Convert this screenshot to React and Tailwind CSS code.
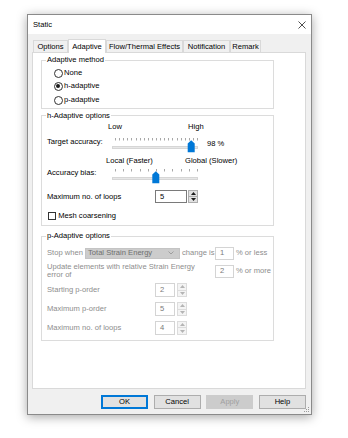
import React from "react";

function Spin({ disabled }) {
  const edge = disabled ? "border-[#dcdcdc]" : "border-[#adadad]";
  const fill = disabled ? "#b4b4b4" : "#1a1a1a";
  return (
    <div className={`flex flex-col w-[10px] h-full border ${edge} ${disabled ? "bg-[#f4f4f4]" : "bg-[#e1e1e1]"}`}>
      <div className={`flex-1 flex items-center justify-center border-b ${edge}`}>
        <svg width="5" height="3" viewBox="0 0 5 3">
          <path d="M0 3 L2.5 0 L5 3Z" fill={fill} />
        </svg>
      </div>
      <div className="flex-1 flex items-center justify-center">
        <svg width="5" height="3" viewBox="0 0 5 3">
          <path d="M0 0 L2.5 3 L5 0Z" fill={fill} />
        </svg>
      </div>
    </div>
  );
}

function Slider({ ticks, thumb }) {
  const xs = Array.from({ length: ticks }, (_, i) => 5 + (82 * i) / (ticks - 1));
  return (
    <svg width="90" height="18" viewBox="0 0 90 18" className="shrink-0">
      {xs.map((x, i) => (
        <line key={i} x1={Math.round(x) + 0.5} x2={Math.round(x) + 0.5} y1="2" y2="4.5" stroke="#a8a8a8" strokeWidth="1" />
      ))}
      <rect x="2.5" y="10.5" width="85" height="2" fill="#e7e7e7" stroke="#d6d6d6" strokeWidth="1" />
      <path d={`M${thumb} 7.5 L${thumb + 3.5} 4.3 L${thumb + 7} 7.5 V16.3 H${thumb} Z`} fill="#0078d7" />
    </svg>
  );
}

function Radio({ checked, label, className }) {
  return (
    <div className={`flex items-center h-[13px] pl-[12px] gap-[1.5px] ${className || ""}`}>
      <div className="w-[8.5px] h-[8.5px] rounded-full border border-[#333] bg-white flex items-center justify-center">
        {checked && <div className="w-[4px] h-[4px] rounded-full bg-[#1a1a1a]" />}
      </div>
      <span>{label}</span>
    </div>
  );
}

function Box({ value, w, h, disabled }) {
  return (
    <div
      className={`${w} ${h} bg-white border flex items-center pl-[4px] ${
        disabled ? "border-[#d4d4d4] text-[#7a7a7a]" : "border-[#7a7a7a] text-black"
      }`}
    >
      {value}
    </div>
  );
}

export default function App() {
  const tabs = [
    { name: "Options", w: "w-[35px]" },
    { name: "Adaptive", w: "w-[38px]", active: true },
    { name: "Flow/Thermal Effects", w: "w-[77px]" },
    { name: "Notification", w: "w-[47px]" },
    { name: "Remark", w: "w-[31px]" },
  ];

  return (
    <div className="w-[348px] h-[438px] bg-white overflow-hidden font-['Liberation_Sans',Arial,sans-serif] text-[7.6px] leading-[10px] text-black">
      {/* Dialog window */}
      <div className="ml-[27px] mt-[14px] w-[285px] h-[401px] border border-[#8a8a8a] bg-[#f0f0f0] flex flex-col relative shadow-[0_2px_10px_rgba(0,0,0,0.35)]">
        {/* Title bar */}
        <div className="h-[19px] bg-white flex items-center justify-between pl-[5px] pr-[5px]">
          <span>Static</span>
          <svg width="8" height="8" viewBox="0 0 8 8">
            <path d="M0.5 0.5 L7.5 7.5 M7.5 0.5 L0.5 7.5" stroke="#222" strokeWidth="0.8" />
          </svg>
        </div>

        <div className="flex flex-col pl-[4px] pr-[5px] pt-[5px]">
          {/* Tabs */}
          <div className="flex items-end h-[13px] ml-[1px]">
            {tabs.map((t) =>
              t.active ? (
                <div
                  key={t.name}
                  className={`${t.w} h-[14px] -mb-[1px] relative z-10 bg-white border border-b-0 border-[#d9d9d9] flex items-center justify-center`}
                >
                  {t.name}
                </div>
              ) : (
                <div
                  key={t.name}
                  className={`${t.w} h-[12px] bg-[#f0f0f0] border border-b-0 border-[#d9d9d9] flex items-center justify-center`}
                >
                  {t.name}
                </div>
              )
            )}
          </div>

          {/* Panel */}
          <div className="h-[337px] bg-white border border-[#d9d9d9] pl-[8px]">
            {/* Adaptive method */}
            <fieldset className="mt-[2.3px] w-[233px] h-[54px] border border-[#dcdcdc]">
              <legend className="ml-[4px] px-[1px] leading-[10px]">Adaptive method</legend>
              <div className="pt-[1.7px]">
                <Radio label="None" />
                <Radio label="h-adaptive" checked />
                <Radio label="p-adaptive" className="mt-[1px]" />
              </div>
            </fieldset>

            {/* h-Adaptive options */}
            <fieldset className="mt-[1.5px] w-[233px] h-[115px] border border-[#dcdcdc]">
              <legend className="ml-[4px] px-[1px] leading-[10px]">h-Adaptive options</legend>
              <div className="pl-[5px]">
                <div className="mt-[1.5px] h-[10px] flex pl-[61px]">
                  <span className="w-[80px]">Low</span>
                  <span>High</span>
                </div>
                <div className="mt-[4px] h-[18px] flex items-start">
                  <span className="w-[63px] pt-[1px]">Target accuracy:</span>
                  <Slider ticks={21} thumb={77.7} />
                  <span className="ml-[7px] pt-[3px]">98 %</span>
                </div>
                <div className="mt-[1.5px] h-[10px] flex pl-[59px]">
                  <span className="w-[79px]">Local (Faster)</span>
                  <span>Global (Slower)</span>
                </div>
                <div className="mt-[1.2px] h-[18px] flex items-start">
                  <span className="w-[63px] pt-[1px]">Accuracy bias:</span>
                  <Slider ticks={11} thumb={42.3} />
                </div>
                <div className="mt-[5.3px] h-[13px] flex items-center">
                  <span className="w-[108px]">Maximum no. of loops</span>
                  <Box value="5" w="w-[32px]" h="h-[13px]" />
                  <div className="ml-[1.3px] h-[13px]">
                    <Spin />
                  </div>
                </div>
                <div className="mt-[8px] h-[10px] flex items-center gap-[2.5px] pl-[0.7px]">
                  <div className="w-[8px] h-[8px] border border-[#333] bg-white" />
                  <span>Mesh coarsening</span>
                </div>
              </div>
            </fieldset>

            {/* p-Adaptive options */}
            <fieldset className="mt-[5.5px] w-[233px] h-[109.5px] border border-[#dcdcdc]">
              <legend className="ml-[4px] px-[1px] leading-[10px]">p-Adaptive options</legend>
              <div className="pl-[5px] text-[#8d8d8d]">
                <div className="mt-[5.8px] h-[12.5px] flex items-center">
                  <span className="w-[38px]">Stop when</span>
                  <div className="w-[95px] h-[11px] bg-[#cccccc] border border-[#c4c4c4] flex items-center justify-between pl-[2px] pr-[5px] text-[#6f6f6f]">
                    <span>Total Strain Energy</span>
                    <svg width="6" height="4" viewBox="0 0 6 4">
                      <path d="M0.5 0.5 L3 3 L5.5 0.5" fill="none" stroke="#8a8a8a" strokeWidth="0.7" />
                    </svg>
                  </div>
                  <span className="w-[35px] pl-[2px]">change is</span>
                  <Box value="1" w="w-[19px]" h="h-[12.5px]" disabled />
                  <span className="ml-[2px]">% or less</span>
                </div>
                <div className="mt-[3.2px] h-[17px] flex items-center">
                  <div className="w-[168px] leading-[8.5px]">
                    <div>Update elements with relative Strain Energy</div>
                    <div>error of</div>
                  </div>
                  <Box value="2" w="w-[19px]" h="h-[13px]" disabled />
                  <span className="ml-[2px]">% or more</span>
                </div>
                {[
                  { label: "Starting p-order", v: "2", mt: "mt-[3.3px]" },
                  { label: "Maximum p-order", v: "5", mt: "mt-[5px]" },
                  { label: "Maximum no. of loops", v: "4", mt: "mt-[4.7px]" },
                ].map((r) => (
                  <div key={r.label} className={`${r.mt} h-[14px] flex items-center`}>
                    <span className="w-[108px]">{r.label}</span>
                    <Box value={r.v} w="w-[20px]" h="h-[14px]" disabled />
                    <div className="ml-[2.3px] h-[14px]">
                      <Spin disabled />
                    </div>
                  </div>
                ))}
              </div>
            </fieldset>
          </div>

          {/* Buttons */}
          <div className="mt-[6px] flex gap-[5.5px] ml-[69px]">
            <button className="w-[47.5px] h-[14px] bg-[#e1e1e1] border border-[#0078d7] shadow-[inset_0_0_0_1px_#0078d7]">OK</button>
            <button className="w-[47.5px] h-[14px] bg-[#e1e1e1] border border-[#adadad]">Cancel</button>
            <button className="w-[47.5px] h-[14px] bg-[#cccccc] border border-[#cccccc] text-[#a0a0a0]">Apply</button>
            <button className="w-[47.5px] h-[14px] bg-[#e1e1e1] border border-[#adadad]">Help</button>
          </div>
        </div>

        {/* Resize grip */}
        <svg width="6" height="6" viewBox="0 0 6 6" className="absolute right-[1px] bottom-[1px]">
          <rect x="4" y="0" width="1" height="1" fill="#9a9a9a" />
          <rect x="2" y="2" width="1" height="1" fill="#9a9a9a" />
          <rect x="4" y="2" width="1" height="1" fill="#9a9a9a" />
          <rect x="0" y="4" width="1" height="1" fill="#9a9a9a" />
          <rect x="2" y="4" width="1" height="1" fill="#9a9a9a" />
          <rect x="4" y="4" width="1" height="1" fill="#9a9a9a" />
        </svg>
      </div>
    </div>
  );
}
